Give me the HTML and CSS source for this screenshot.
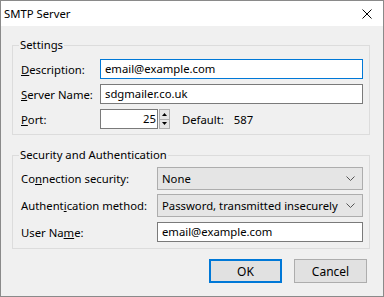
FILE: index.html
```html
<!DOCTYPE html>
<html lang="en">
<head>
  <meta charset="UTF-8">
  <title>SMTP Server</title>
  <link rel="stylesheet" href="styles.css">
</head>
<body>
  <div class="window">
    <div class="titlebar">
      <span class="title">SMTP Server</span>
      <svg class="close" width="10" height="10" viewBox="0 0 10 10">
        <path d="M0.5 0.5L9.5 9.5M9.5 0.5L0.5 9.5" stroke="#000" stroke-width="1"></path>
      </svg>
    </div>

    <div class="content">
      <fieldset class="group">
        <legend>Settings</legend>
        <div class="row">
          <label class="label label-short"><u>D</u>escription:</label>
          <div class="field field-focus">email@example.com</div>
        </div>
        <div class="row">
          <label class="label label-short"><u>S</u>erver Name:</label>
          <div class="field">sdgmailer.co.uk</div>
        </div>
        <div class="row">
          <label class="label label-short"><u>P</u>ort:</label>
          <div class="field field-port">25</div>
          <div class="spinner">
            <span class="spin-btn"><svg width="5" height="3" viewBox="0 0 5 3"><path d="M2.5 0L5 3H0z" fill="#000"></path></svg></span>
            <span class="spin-btn"><svg width="5" height="3" viewBox="0 0 5 3"><path d="M0 0H5L2.5 3z" fill="#000"></path></svg></span>
          </div>
          <span class="default">Default:</span>
          <span class="default-value">587</span>
        </div>
      </fieldset>

      <fieldset class="group group-security">
        <legend>Security and Authentication</legend>
        <div class="row row-select">
          <label class="label">Co<u>n</u>nection security:</label>
          <div class="select">None<span class="chevron"><svg width="9" height="5" viewBox="0 0 9 5"><path d="M0.5 0.5L4.5 4.5L8.5 0.5" fill="none" stroke="#555" stroke-width="1"></path></svg></span></div>
        </div>
        <div class="row row-select">
          <label class="label">Authent<u>i</u>cation method:</label>
          <div class="select">Password, transmitted insecurely<span class="chevron"><svg width="9" height="5" viewBox="0 0 9 5"><path d="M0.5 0.5L4.5 4.5L8.5 0.5" fill="none" stroke="#555" stroke-width="1"></path></svg></span></div>
        </div>
        <div class="row">
          <label class="label">User Na<u>m</u>e:</label>
          <div class="field">email@example.com</div>
        </div>
      </fieldset>

      <div class="buttons">
        <button class="btn btn-default">OK</button>
        <button class="btn">Cancel</button>
      </div>
    </div>
  </div>
</body>
</html>
```

FILE: styles.css
```css
* {
  margin: 0;
  padding: 0;
  box-sizing: border-box;
}

body {
  font-family: 'Noto Sans', 'Open Sans', sans-serif;
  font-size: 11.3px;
  color: #000;
  background: #fff;
}

.window {
  width: 384px;
  height: 297px;
  border: 1px solid #8a8a8a;
  background: #f0f0f0;
}

.titlebar {
  height: 25px;
  background: #fff;
  display: flex;
  align-items: center;
  justify-content: space-between;
  padding: 0 11px 0 3px;
}

.content {
  padding: 11px 13px 0 11px;
}

.group {
  border: 1px solid #dcdcdc;
  padding: 1px 6px 5px 8px;
}

.group legend {
  padding: 0 1px;
  margin-left: -2px;
  line-height: 16px;
}

.group-security {
  margin-top: 12px;
  padding-top: 0;
  padding-bottom: 6px;
}

.row {
  display: flex;
  align-items: center;
  height: 20px;
  margin-top: 5px;
}

.row-select {
  height: 23px;
  margin-top: 4px;
}

.label {
  width: 136px;
  flex-shrink: 0;
  white-space: nowrap;
}

.label-short {
  width: 79px;
}

.field {
  flex: 1;
  height: 20px;
  background: #fff;
  border: 1px solid #7a7a7a;
  padding: 0 4px;
  line-height: 18px;
  white-space: nowrap;
}

.field-focus {
  border-color: #0078d7;
}

.field-port {
  flex: 0 0 58px;
  text-align: right;
  padding-right: 1px;
}

.spinner {
  display: flex;
  flex-direction: column;
  width: 11px;
  height: 20px;
  margin-left: 1px;
}

.spin-btn {
  flex: 1;
  display: flex;
  align-items: center;
  justify-content: center;
  background: #e5e5e5;
  border: 1px solid #adadad;
}

.spin-btn + .spin-btn {
  border-top: none;
}

.default {
  margin-left: 12px;
}

.default-value {
  margin-left: 10px;
}

.select {
  flex: 1;
  height: 23px;
  display: flex;
  align-items: center;
  justify-content: space-between;
  background: #e5e5e5;
  border: 1px solid #adadad;
  padding: 0 7px 0 4px;
  white-space: nowrap;
}

.chevron {
  display: flex;
}

.buttons {
  display: flex;
  justify-content: flex-end;
  gap: 12px;
  margin-top: 10px;
  margin-right: 3px;
}

.btn {
  width: 73px;
  height: 24px;
  font-family: inherit;
  font-size: 12px;
  background: #e1e1e1;
  border: 1px solid #adadad;
  color: #000;
}

.btn-default {
  border: 2px solid #0078d7;
}
```
